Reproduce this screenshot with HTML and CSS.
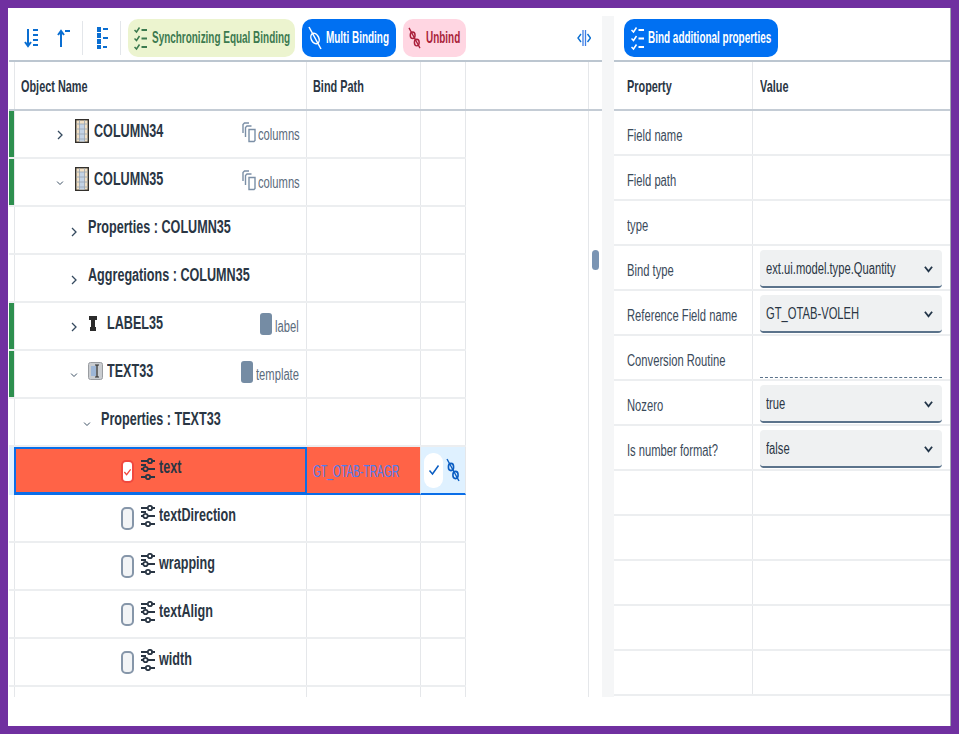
FILE: index.html
```html
<!DOCTYPE html>
<html lang="en">
<head>
  <meta charset="UTF-8" />
  <title>Binding</title>
  <link rel="stylesheet" href="styles.css">
</head>
<body>
  <svg class="defs" width="0" height="0">
    <symbol id="prop" viewBox="0 0 14 22">
      <path d="M0 3h6M0 7h5M0 11h2M7 11h7M0 19h4M9 19h5M10 3h4" fill="none" stroke="currentColor" stroke-width="2"/>
      <circle cx="9" cy="3" r="2.200" fill="none" stroke="currentColor" stroke-width="1.800"/>
      <circle cx="4.500" cy="11" r="2.200" fill="none" stroke="currentColor" stroke-width="1.800"/>
      <circle cx="7" cy="19" r="2.200" fill="none" stroke="currentColor" stroke-width="1.800"/>
    </symbol>
    <symbol id="checklist" viewBox="0 0 13 25">
      <path d="M0.500 4l2 2 3-4.500M0.500 12.500l2 2 3-4.500M0.500 21l2 2 3-4.500" fill="none" stroke="currentColor" stroke-width="1.500"/>
      <path d="M7.500 4h5.500M7.500 12.500h5.500M7.500 21h5.500" fill="none" stroke="currentColor" stroke-width="2.200"/>
    </symbol>
    <symbol id="link" viewBox="0 0 14 24">
      <path d="M1 1l12 22" fill="none" stroke="currentColor" stroke-width="1.400"/>
      <ellipse cx="5" cy="9" rx="2.600" ry="3.600" fill="none" stroke="currentColor" stroke-width="1.600"/>
      <ellipse cx="9.500" cy="17" rx="2.600" ry="3.600" fill="none" stroke="currentColor" stroke-width="1.600"/>
    </symbol>
    <symbol id="bindOne" viewBox="0 0 14 24">
      <path d="M1 1l12 22" fill="none" stroke="currentColor" stroke-width="1.500"/>
      <ellipse cx="7" cy="12.500" rx="3.800" ry="5.500" fill="none" stroke="currentColor" stroke-width="1.500" transform="rotate(-25 7 12.500)"/>
    </symbol>
    <symbol id="copies" viewBox="0 0 14 21">
      <path d="M7 1H2.500L1 2.500V11M9.500 4H5L3.500 5.500V15M13 7.500H7v12h5l1-1z" fill="none" stroke="currentColor" stroke-width="1.400"/>
    </symbol>
    <symbol id="grid" viewBox="0 0 14 24">
      <rect x="0.700" y="0.700" width="12.600" height="22.600" fill="#f1dfc4" stroke="#33302c" stroke-width="1.400"/>
      <rect x="4.500" y="5" width="5" height="17.500" fill="#c3d3e6"/>
      <path d="M4.500 1v22M9.500 1v22M1 5h12M1 10h12M1 15h12M1 20h12" stroke="#98a4b2" stroke-width="0.800"/>
    </symbol>
    <symbol id="chev" viewBox="0 0 6 10">
      <path d="M1 1l4 4-4 4" fill="none" stroke="currentColor" stroke-width="1.300"/>
    </symbol>
    <symbol id="down" viewBox="0 0 10 8">
      <path d="M1 1.500l4 5 4-5" fill="none" stroke="currentColor" stroke-width="2"/>
    </symbol>
  </svg>

  <div class="frame">
    <section class="leftPanel">
      <div class="toolbar">
        <svg class="toolIcon first" width="15" height="20" viewBox="0 0 15 20"><path d="M4 1v17M1 14l3 4 3-4M9 2h5M9 7h5M9 12h5M9 17h5" fill="none" stroke="#0a6ed1" stroke-width="2"/></svg>
        <svg class="toolIcon second" width="15" height="20" viewBox="0 0 15 20"><path d="M5 19V3M2 7l3-4 3 4M9 3h5" fill="none" stroke="#0a6ed1" stroke-width="2"/></svg>
        <span class="sep"></span>
        <svg class="toolIcon third" width="13" height="24" viewBox="0 0 13 24"><path d="M3 1v22" stroke="#0a6ed1" stroke-width="4" stroke-dasharray="5 1"/><path d="M7 3h5M7 12h5M7 21h4" stroke="#0a6ed1" stroke-width="2"/></svg>
        <span class="sep"></span>
        <button class="btn green"><svg width="13" height="25"><use href="#checklist"/></svg><span class="sq">Synchronizing Equal Binding</span></button>
        <button class="btn blue multi"><svg width="14" height="24"><use href="#bindOne"/></svg><span class="sq">Multi Binding</span></button>
        <button class="btn pink"><svg width="13" height="22"><use href="#link"/></svg><span class="sq">Unbind</span></button>
        <svg class="collapse" width="14" height="16" viewBox="0 0 14 16"><path d="M6 0v16M8.500 0v16" stroke="#3f7fe6" stroke-width="1.300"/><path d="M4 4L1 8l3 4M10.500 4l3 4-3 4" fill="none" stroke="#0a6ed1" stroke-width="1.400"/></svg>
      </div>

      <div class="treeHead">
        <div class="cell nameCol headCell"><span class="sq">Object Name</span></div>
        <div class="cell pathCol headCell"><span class="sq">Bind Path</span></div>
        <div class="cell actCol"></div>
        <div class="cell restCol"></div>
      </div>

      <div class="tree">
        <div class="row bound">
          <div class="cell nameCol lvl1"><svg class="chev" width="6" height="10"><use href="#chev"/></svg><svg class="objIcon" width="14" height="24"><use href="#grid"/></svg><span class="name sq">COLUMN34</span><span class="agg aggColumns"><svg width="14" height="21"><use href="#copies"/></svg><span class="sq">columns</span></span></div>
          <div class="cell pathCol"></div><div class="cell actCol"></div>
        </div>
        <div class="row bound">
          <div class="cell nameCol lvl1"><svg class="chev open" width="6" height="10"><use href="#chev"/></svg><svg class="objIcon" width="14" height="24"><use href="#grid"/></svg><span class="name sq">COLUMN35</span><span class="agg aggColumns"><svg width="14" height="21"><use href="#copies"/></svg><span class="sq">columns</span></span></div>
          <div class="cell pathCol"></div><div class="cell actCol"></div>
        </div>
        <div class="row">
          <div class="cell nameCol lvl2"><svg class="chev" width="6" height="10"><use href="#chev"/></svg><span class="name sq">Properties : COLUMN35</span></div>
          <div class="cell pathCol"></div><div class="cell actCol"></div>
        </div>
        <div class="row">
          <div class="cell nameCol lvl2"><svg class="chev" width="6" height="10"><use href="#chev"/></svg><span class="name sq">Aggregations : COLUMN35</span></div>
          <div class="cell pathCol"></div><div class="cell actCol"></div>
        </div>
        <div class="row bound">
          <div class="cell nameCol lvl2"><svg class="chev" width="6" height="10"><use href="#chev"/></svg><svg class="labelIcon" width="8" height="15" viewBox="0 0 8 15"><path d="M0 0h8v4H6v7h1v4H1v-4h1V4H0z" fill="#2b2b2b"/></svg><span class="name sq">LABEL35</span><span class="agg aggLabel"><i class="swatch"></i><span class="sq">label</span></span></div>
          <div class="cell pathCol"></div><div class="cell actCol"></div>
        </div>
        <div class="row bound">
          <div class="cell nameCol lvl2"><svg class="chev open" width="6" height="10"><use href="#chev"/></svg><svg class="textIcon" width="15" height="18" viewBox="0 0 15 18"><rect x="0.500" y="0.500" width="14" height="17" rx="2" fill="#c9ccd0" stroke="#9a9da1"/><rect x="3" y="4" width="5" height="10" fill="#9db6d6"/><path d="M9 3v12M7 3h4M7 15h4" stroke="#2b2b2b" stroke-width="1.200" fill="none"/></svg><span class="name sq">TEXT33</span><span class="agg aggTemplate"><i class="swatch"></i><span class="sq">template</span></span></div>
          <div class="cell pathCol"></div><div class="cell actCol"></div>
        </div>
        <div class="row">
          <div class="cell nameCol lvl3"><svg class="chev open" width="6" height="10"><use href="#chev"/></svg><span class="name sq">Properties : TEXT33</span></div>
          <div class="cell pathCol"></div><div class="cell actCol"></div>
        </div>
        <div class="row selected">
          <div class="cell nameCol lvl4"><span class="check on"><svg width="10" height="10" viewBox="0 0 10 10"><path d="M1.500 5l2.500 3 4.500-6" fill="none" stroke="#f0483e" stroke-width="1.400"/></svg></span><svg class="propIcon" width="14" height="22"><use href="#prop"/></svg><span class="name sq">text</span></div>
          <div class="cell pathCol"><span class="boundPath sq">GT_OTAB-TRAGR</span></div>
          <div class="cell actCol"><span class="pill"><svg width="12" height="12" viewBox="0 0 12 12"><path d="M1.500 6.500l3 3.500 6-8.500" fill="none" stroke="#0a5dc2" stroke-width="1.500"/></svg></span><svg class="rowLink" width="14" height="24"><use href="#link"/></svg></div>
        </div>
        <div class="row">
          <div class="cell nameCol lvl4"><span class="check"></span><svg class="propIcon" width="14" height="22"><use href="#prop"/></svg><span class="name sq">textDirection</span></div>
          <div class="cell pathCol"></div><div class="cell actCol"></div>
        </div>
        <div class="row">
          <div class="cell nameCol lvl4"><span class="check"></span><svg class="propIcon" width="14" height="22"><use href="#prop"/></svg><span class="name sq">wrapping</span></div>
          <div class="cell pathCol"></div><div class="cell actCol"></div>
        </div>
        <div class="row">
          <div class="cell nameCol lvl4"><span class="check"></span><svg class="propIcon" width="14" height="22"><use href="#prop"/></svg><span class="name sq">textAlign</span></div>
          <div class="cell pathCol"></div><div class="cell actCol"></div>
        </div>
        <div class="row">
          <div class="cell nameCol lvl4"><span class="check"></span><svg class="propIcon" width="14" height="22"><use href="#prop"/></svg><span class="name sq">width</span></div>
          <div class="cell pathCol"></div><div class="cell actCol"></div>
        </div>
        <div class="row tail">
          <div class="cell nameCol"></div><div class="cell pathCol"></div><div class="cell actCol"></div>
        </div>
      </div>
      <span class="sash"></span>
    </section>

    <div class="splitter"></div>

    <section class="rightPanel">
      <div class="toolbar rightBar">
        <button class="btn blue bindMore"><svg width="13" height="25"><use href="#checklist"/></svg><span class="sq">Bind additional properties</span></button>
      </div>
      <div class="propHead">
        <div class="pCell"><span class="sq">Property</span></div>
        <div class="vCell"><span class="sq">Value</span></div>
      </div>
      <div class="propRow"><div class="pCell"><span class="sq">Field name</span></div><div class="vCell"></div></div>
      <div class="propRow"><div class="pCell"><span class="sq">Field path</span></div><div class="vCell"></div></div>
      <div class="propRow"><div class="pCell"><span class="sq">type</span></div><div class="vCell"></div></div>
      <div class="propRow"><div class="pCell"><span class="sq">Bind type</span></div><div class="vCell"><div class="select"><span class="sq">ext.ui.model.type.Quantity</span><svg width="9" height="8"><use href="#down"/></svg></div></div></div>
      <div class="propRow"><div class="pCell"><span class="sq">Reference Field name</span></div><div class="vCell"><div class="select"><span class="sq">GT_OTAB-VOLEH</span><svg width="9" height="8"><use href="#down"/></svg></div></div></div>
      <div class="propRow"><div class="pCell"><span class="sq">Conversion Routine</span></div><div class="vCell"><div class="readonly"></div></div></div>
      <div class="propRow"><div class="pCell"><span class="sq">Nozero</span></div><div class="vCell"><div class="select"><span class="sq">true</span><svg width="9" height="8"><use href="#down"/></svg></div></div></div>
      <div class="propRow"><div class="pCell"><span class="sq">Is number format?</span></div><div class="vCell"><div class="select"><span class="sq">false</span><svg width="9" height="8"><use href="#down"/></svg></div></div></div>
      <div class="propRow"><div class="pCell"></div><div class="vCell"></div></div>
      <div class="propRow"><div class="pCell"></div><div class="vCell"></div></div>
      <div class="propRow"><div class="pCell"></div><div class="vCell"></div></div>
      <div class="propRow"><div class="pCell"></div><div class="vCell"></div></div>
      <div class="propRow"><div class="pCell"></div><div class="vCell"></div></div>
    </section>
  </div>
</body>
</html>
```

FILE: styles.css
```css
html, body {
  margin: 0;
  height: 100%;
}
body {
  background-color: #7030a0;
  padding: 8px;
  box-sizing: border-box;
  font-family: "Liberation Sans", Arial, sans-serif;
  color: #2a3644;
}
.defs {
  position: absolute;
}
.frame {
  display: flex;
  height: 718px;
  background-color: white;
  padding-left: 1px;
}

/* the reference text is squeezed sideways */
.sq {
  display: inline-block;
  flex: none;
  white-space: nowrap;
  transform-origin: left center;
  transform: scaleX(.7);
}

/* left side */
.leftPanel {
  position: relative;
  width: 593px;
  flex: none;
}
.toolbar {
  display: flex;
  align-items: center;
  height: 54px;
  padding: 11px 0 3px;
  box-sizing: border-box;
  border-bottom: 2px solid #bcc6d0;
}
.toolIcon.first { margin-left: 15px; }
.toolIcon.second { margin-left: 17px; }
.sep {
  width: 1px;
  height: 34px;
  margin-left: 11px;
  background-color: #e3e6ea;
}
.sep + .toolIcon { margin-left: 13px; }
.btn {
  display: flex;
  flex: none;
  align-items: center;
  height: 38px;
  border: none;
  border-radius: 10px;
  font-family: inherit;
  font-size: 17px;
  font-weight: bold;
}
.btn svg {
  flex: none;
}
.btn .sq {
  transform: scaleX(.585);
}
.green {
  width: 167px;
  margin-left: 7px;
  padding: 0 0 0 6px;
  gap: 5px;
  background-color: #ecf4cf;
  color: #3c7a4f;
}
.blue {
  background-color: #0070f2;
  color: white;
}
.multi {
  width: 94px;
  margin-left: 7px;
  padding: 0 0 0 6px;
  gap: 4px;
}
.pink {
  width: 63px;
  margin-left: 7px;
  padding: 0 0 0 5px;
  gap: 5px;
  background-color: #ffd6e2;
  color: #aa1f3a;
}
.collapse {
  margin-left: 111px;
}

.treeHead, .row {
  display: flex;
  box-sizing: border-box;
  padding-left: 5px;
}
.treeHead {
  height: 49px;
  border-bottom: 2px solid #c4ccd5;
}
.cell {
  box-sizing: border-box;
  border-right: 1px solid #e5e7ea;
}
.headCell {
  font-size: 17px;
  font-weight: bold;
  padding-top: 3px;
}
.headCell .sq {
  transform: scaleX(.64);
}
.nameCol {
  flex: none;
  width: 293px;
  display: flex;
  align-items: center;
  padding-right: 6px;
  padding-bottom: 5px;
  border-left: 1px solid #e5e7ea;
}
.headCell.nameCol {
  padding: 3px 0 0 6px;
}
.pathCol {
  flex: none;
  width: 114px;
  display: flex;
  align-items: center;
}
.headCell.pathCol { padding-left: 6px; }
.actCol {
  flex: none;
  width: 45px;
  display: flex;
  align-items: center;
}
.restCol {
  width: 123px;
}
.tree {
  height: 586px;
  overflow: hidden;
  background: linear-gradient(#e5e7ea, #e5e7ea) 579px 0 / 1px 100% no-repeat;
}
.row {
  width: 457px;
  height: 48px;
  border-bottom: 2px solid #eceef0;
}
.row.tail {
  height: 11px;
  border-bottom: none;
}
.row.bound {
  box-shadow: inset 5px 0 0 #2d8f4e;
}
.row.bound .nameCol {
  padding-bottom: 6px;
}
.name {
  font-size: 18px;
  font-weight: bold;
}
.chev {
  flex: none;
  margin-top: 8px;
  color: #354a5f;
}
.chev.open {
  transform: rotate(90deg) scale(.75);
}
.lvl1 { padding-left: 42px; }
.lvl2 { padding-left: 56px; }
.lvl3 { padding-left: 69px; }
.lvl4 { padding-left: 106px; }
.lvl1 .objIcon {
  flex: none;
  margin: 0 5px 0 12px;
}
.lvl2 .chev + .name,
.lvl3 .chev + .name {
  margin-left: 11px;
}
.labelIcon {
  flex: none;
  margin: 0 10px 0 12px;
}
.textIcon {
  flex: none;
  margin: 0 4px 0 11px;
}
.agg {
  display: flex;
  flex: none;
  align-items: center;
  gap: 2px;
  margin-left: auto;
  margin-top: 8px;
  font-size: 16px;
  color: #5b6b7c;
}
.aggColumns { width: 58px; }
.aggLabel { width: 40px; gap: 3px; }
.aggTemplate { width: 59px; gap: 3px; }
.agg svg {
  flex: none;
  margin-top: -5px;
  color: #7b8fa6;
}
.swatch {
  display: inline-block;
  flex: none;
  width: 12px;
  height: 22px;
  margin-top: -6px;
  border-radius: 3px;
  background-color: #758ca4;
}
.check {
  display: inline-flex;
  flex: none;
  align-items: center;
  justify-content: center;
  width: 13px;
  height: 23px;
  margin-right: 7px;
  margin-top: 5px;
  box-sizing: border-box;
  border: 2px solid #8696a9;
  border-radius: 5px;
  background-color: #f2f4f6;
}
.check.on {
  border-color: #f0483e;
  background-color: white;
}
.propIcon {
  flex: none;
  margin-right: 4px;
  color: #2a3644;
}
.row.selected {
  padding-left: 5px;
  border-bottom: none;
  background-color: #dff1ff;
}
.row.selected .nameCol {
  padding-left: 105px;
  padding-bottom: 3px;
  background-color: #ff6347;
  border: 2px solid #0a6ee8;
  border-bottom-width: 3px;
}
.row.selected .name {
  margin-top: -3px;
}
.row.selected .pathCol {
  background-color: #ff6347;
  border-bottom: 2px solid #0a6ee8;
  padding: 3px 0 0 6px;
}
.row.selected .actCol {
  border-bottom: 2px solid #0a6ee8;
  padding-left: 3px;
  gap: 3px;
}
.boundPath {
  font-size: 16px;
  color: #4d7df0;
  transform: scaleX(.64);
}
.pill {
  display: inline-flex;
  flex: none;
  align-items: center;
  justify-content: center;
  width: 19px;
  height: 35px;
  border-radius: 9px;
  background-color: white;
}
.rowLink {
  flex: none;
  color: #0a5dc2;
}
.sash {
  position: absolute;
  left: 583px;
  top: 242px;
  width: 7px;
  height: 20px;
  border-radius: 4px;
  background-color: #7a94b3;
}

.splitter {
  width: 12px;
  flex: none;
  margin-top: 8px;
  height: 681px;
  background-color: #f5f6f7;
}

/* right side */
.rightPanel {
  flex: 1;
  min-width: 0;
  border-right: 1px solid #9ea6ae;
  overflow: hidden;
}
.rightBar {
  padding-left: 10px;
}
.bindMore {
  width: 154px;
  padding: 0 0 0 7px;
  gap: 4px;
}
.propHead, .propRow {
  display: flex;
  box-sizing: border-box;
}
.propHead {
  height: 49px;
  border-bottom: 2px solid #c4ccd5;
  font-size: 17px;
  font-weight: bold;
}
.propHead .sq {
  transform: scaleX(.64);
}
.propHead .pCell, .propHead .vCell {
  color: #2a3644;
  padding-top: 3px;
  align-items: center;
}
.propRow {
  height: 45px;
  border-bottom: 2px solid #eceef0;
  font-size: 16px;
}
.pCell {
  display: flex;
  flex: none;
  align-items: center;
  width: 139px;
  box-sizing: border-box;
  padding: 7px 0 0 13px;
  border-right: 1px solid #e5e7ea;
  color: #3a4a5a;
}
.vCell {
  flex: 1;
  min-width: 0;
  display: flex;
  align-items: flex-end;
  padding: 0 8px 1px 7px;
}
.select {
  flex: 1;
  min-width: 0;
  display: flex;
  align-items: center;
  justify-content: space-between;
  height: 38px;
  box-sizing: border-box;
  padding: 2px 9px 0 6px;
  background-color: #eff1f2;
  border-bottom: 2px solid #5b738b;
  border-radius: 4px;
}
.select .sq {
  flex: 0 1 auto;
  min-width: 0;
}
.select svg {
  flex: none;
  color: #223548;
}
.readonly {
  flex: 1;
  height: 38px;
  box-sizing: border-box;
  border-bottom: 1px dashed #5b738b;
}
```
